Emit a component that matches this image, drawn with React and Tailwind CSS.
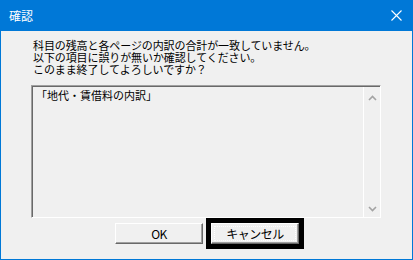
import React from "react";

const font = { fontFamily: '"Noto Sans CJK JP", "Noto Sans", sans-serif' };

function Chevron({ up }) {
  return (
    <svg width="9" height="6" viewBox="0 0 9 6" className="block">
      <path
        d={up ? "M1 5 L4.5 1.5 L8 5" : "M1 1 L4.5 4.5 L8 1"}
        fill="none"
        stroke="#a3a3a3"
        strokeWidth="1.6"
      />
    </svg>
  );
}

function ClassicButton({ children, focused }) {
  return (
    <div className="w-[88px] h-[21px] bg-[#f0f0f0] border border-t-white border-l-white border-r-[#696969] border-b-[#696969] shadow-[inset_-1px_-1px_0_#a0a0a0] flex items-center justify-center p-[2px]">
      <div
        className={`w-full h-full flex items-center justify-center text-[12px] text-black tracking-[-0.5px] ${
          focused ? "border border-dotted border-white" : ""
        }`}
      >
        {children}
      </div>
    </div>
  );
}

export default function App() {
  return (
    <div
      className="w-[413px] h-[260px] flex flex-col bg-[#0078d7] overflow-hidden"
      style={font}
    >
      {/* Title bar */}
      <div className="h-[31px] shrink-0 flex items-center justify-between pl-[9px] pr-[11px]">
        <span className="text-white text-[12px] leading-none">確認</span>
        <svg width="11" height="11" viewBox="0 0 11 11">
          <path d="M0.5 0.5 L10.5 10.5 M10.5 0.5 L0.5 10.5" stroke="#fff" strokeWidth="1.1" />
        </svg>
      </div>

      {/* Client area */}
      <div className="flex-1 mx-px mb-px bg-[#f0f0f0] flex flex-col pl-[30px] pt-[8px]">
        <div className="pl-[2px] text-[11px] leading-[12px] text-black tracking-[-0.1px]">
          <p>科目の残高と各ページの内訳の合計が一致していません。</p>
          <p>以下の項目に誤りが無いか確認してください。</p>
          <p>このまま終了してよろしいですか？</p>
        </div>

        {/* List box */}
        <div className="mt-[10px] w-[350px] h-[133px] flex border border-t-[#a0a0a0] border-l-[#a0a0a0] border-r-white border-b-white shadow-[inset_1px_1px_0_#696969]">
          <div className="flex-1 pl-[4px] pt-[3px] text-[11px] leading-[12px] text-black">
            「地代・賃借料の内訳」
          </div>
          <div className="w-[17px] mt-px border-l border-white flex flex-col items-center justify-between pt-[8px] pb-[5px]">
            <Chevron up />
            <Chevron />
          </div>
        </div>

        {/* Buttons */}
        <div className="flex items-center pl-[84px]">
          <ClassicButton>OK</ClassicButton>
          <div className="ml-[3px] border-[5px] border-black">
            <ClassicButton focused>キャンセル</ClassicButton>
          </div>
        </div>
      </div>
    </div>
  );
}
